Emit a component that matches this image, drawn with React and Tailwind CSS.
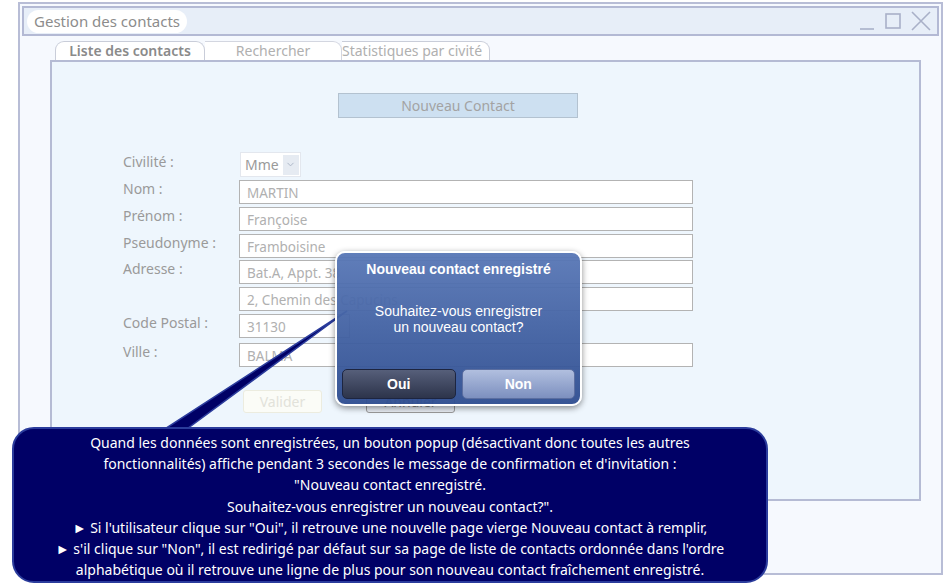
import { ChevronDown } from "lucide-react";

const rows = [
  { label: "Nom :", value: "MARTIN", top: "mt-[3px]" },
  { label: "Prénom :", value: "Françoise", top: "mt-[3px]" },
  { label: "Pseudonyme :", value: "Framboisine", top: "mt-[3px]" },
  { label: "Adresse :", value: "Bat.A, Appt. 38", top: "mt-[2px]" },
  { label: "", value: "2, Chemin des Capucins", top: "mt-[3px]" },
  { label: "Code Postal :", value: "31130", top: "mt-[3px]", short: true },
  { label: "Ville :", value: "BALMA", top: "mt-[5px]" },
];

const calloutLines = [
  "Quand les données sont enregistrées, un bouton popup (désactivant donc toutes les autres",
  "fonctionnalités) affiche pendant 3 secondes le message de confirmation et d'invitation :",
  "\"Nouveau contact enregistré.",
  "Souhaitez-vous enregistrer un nouveau contact?\".",
  "► Si l'utilisateur clique sur \"Oui\", il retrouve une nouvelle page vierge Nouveau contact à remplir,",
  "► s'il clique sur \"Non\", il est redirigé par défaut sur sa page de liste de contacts ordonnée dans l'ordre",
  "alphabétique où il retrouve une ligne de plus pour son nouveau contact fraîchement enregistré.",
];

function WindowControls() {
  return (
    <svg width="76" height="22" viewBox="0 0 76 22" className="text-[#a9b0c8]">
      <line x1="2" y1="19" x2="16" y2="19" stroke="currentColor" strokeWidth="1.6" />
      <rect x="28" y="4" width="14" height="14" fill="none" stroke="currentColor" strokeWidth="1.6" />
      <path d="M54 2 L72 20 M72 2 L54 20" stroke="currentColor" strokeWidth="1.6" />
    </svg>
  );
}

function Field({ label, value, top, short }) {
  return (
    <div className={`flex ${top}`}>
      <div className="w-[116px] h-[24px] text-[14px] leading-[18px] text-[#9a9a9a]">{label}</div>
      <div
        className={`${short ? "w-[111px]" : "w-[454px]"} h-[24px] border border-[#b3b3b3] bg-white pl-[7px] pt-[3px] text-[13.5px] leading-[18px] text-[#b0b0b0]`}
      >
        {value}
      </div>
    </div>
  );
}

export default function App() {
  return (
    <div className="relative w-[949px] h-[588px] bg-white overflow-hidden font-['Noto_Sans',sans-serif]">
      <div className="ml-[18px] mt-[2px] w-[925px] h-[573px] border-2 border-[#b8bdd6] bg-[#f6f9fe] p-[2px]">
        {/* title bar */}
        <div className="flex items-center justify-between h-[30px] border-2 border-[#b3b9d4] bg-[#e7eef8] pl-[3px] pr-[3px]">
          <div className="h-[23px] rounded-full bg-white px-[7px] text-[15px] leading-[23px] text-[#8c8c8c]">
            Gestion des contacts
          </div>
          <WindowControls />
        </div>

        {/* tabs */}
        <div className="flex ml-[33px] mt-[5px] h-[19px] text-[14px] leading-[18px]">
          <div className="w-[150px] rounded-t-[9px] border border-b-0 border-[#c9cdd9] bg-white text-center font-semibold text-[#8a8a8a]">
            Liste des contacts
          </div>
          <div className="w-[137px] rounded-tr-[9px] border-t border-r border-[#d3d6e0] bg-white text-center text-[#b0b0b0]">
            Rechercher
          </div>
          <div className="w-[148px] rounded-tr-[9px] border-t border-r border-[#c9cdd9] bg-white text-[#b0b0b0]">
            Statistiques par civité
          </div>
        </div>

        {/* content panel */}
        <div className="ml-[28px] w-[871px] h-[441px] border-2 border-[#b5bbd4] bg-[#eef6fd]">
          <div className="ml-[286px] mt-[31px] w-[240px] h-[25px] border border-[#b3c2d0] bg-[#cde0f1] text-center text-[14px] leading-[23px] text-[#a3a3a3]">
            Nouveau Contact
          </div>

          <div className="ml-[71px] mt-[34px]">
            <div className="flex">
              <div className="w-[117px] pt-[1px] text-[14px] leading-[18px] text-[#9a9a9a]">Civilité :</div>
              <div className="flex items-center w-[61px] h-[25px] border border-[#e3e7ee] bg-white pl-[4px] text-[14px] text-[#9a9a9a]">
                Mme
                <span className="ml-[4px] flex items-center justify-center w-[16px] h-[20px] bg-[#e6ebf2]">
                  <ChevronDown size={11} className="text-[#a8b2c4]" />
                </span>
              </div>
            </div>
            {rows.map((r, i) => (
              <Field key={i} {...r} />
            ))}
            <div className="flex mt-[23px] ml-[120px]">
              <div className="w-[79px] h-[23px] rounded-[3px] border border-[#ececdf] bg-[#fbfcf7] text-center text-[14px] leading-[21px] text-[#e2e2da]">
                Valider
              </div>
              <div className="ml-[44px] w-[89px] h-[23px] rounded-[3px] border border-[#9a9a9a] bg-[#e9eef5] text-center text-[14px] leading-[21px] text-[#8a8a8a]">
                Annuler
              </div>
            </div>
          </div>
        </div>
      </div>

      {/* callout pointer */}
      <svg className="absolute left-0 top-0" width="949" height="588" viewBox="0 0 949 588">
        <polygon points="157,434 180,434 347,311" fill="#000066" stroke="#2b3c9c" strokeWidth="1.5" />
      </svg>

      {/* confirmation dialog */}
      <div className="absolute left-[335px] top-[251px] w-[247px] h-[155px] rounded-[10px] border-2 border-white bg-gradient-to-b from-[#5877b6]/95 to-[#2e4d90]/95 shadow-[0_2px_6px_rgba(0,0,0,0.45)] font-['Liberation_Sans',Arial,sans-serif] text-white">
        <div className="pt-[7px] text-center text-[14px] font-bold leading-[18px]">Nouveau contact enregistré</div>
        <div className="mt-[25px] text-center text-[14px] leading-[16px]">
          Souhaitez-vous enregistrer
          <br />
          un nouveau contact?
        </div>
        <div className="flex gap-[6px] px-[5px] mt-[34px]">
          <div className="w-[114px] h-[30px] rounded-[5px] border border-[#1d2540] bg-gradient-to-b from-[#565f7a] to-[#2d344b] text-center text-[14px] font-bold leading-[28px]">
            Oui
          </div>
          <div className="w-[114px] h-[30px] rounded-[5px] border border-[#5b6ea0] bg-gradient-to-b from-[#b1bfdf] to-[#7d90bf] text-center text-[14px] font-bold leading-[28px]">
            Non
          </div>
        </div>
      </div>

      {/* annotation callout */}
      <div className="absolute left-[12px] top-[427px] w-[756px] h-[156px] rounded-[22px] border-2 border-[#2b3c9c] bg-[#000066] pt-[3px] text-center text-[14px] leading-[21.2px] text-white">
        {calloutLines.map((l, i) => (
          <div key={i}>{l}</div>
        ))}
      </div>
    </div>
  );
}
